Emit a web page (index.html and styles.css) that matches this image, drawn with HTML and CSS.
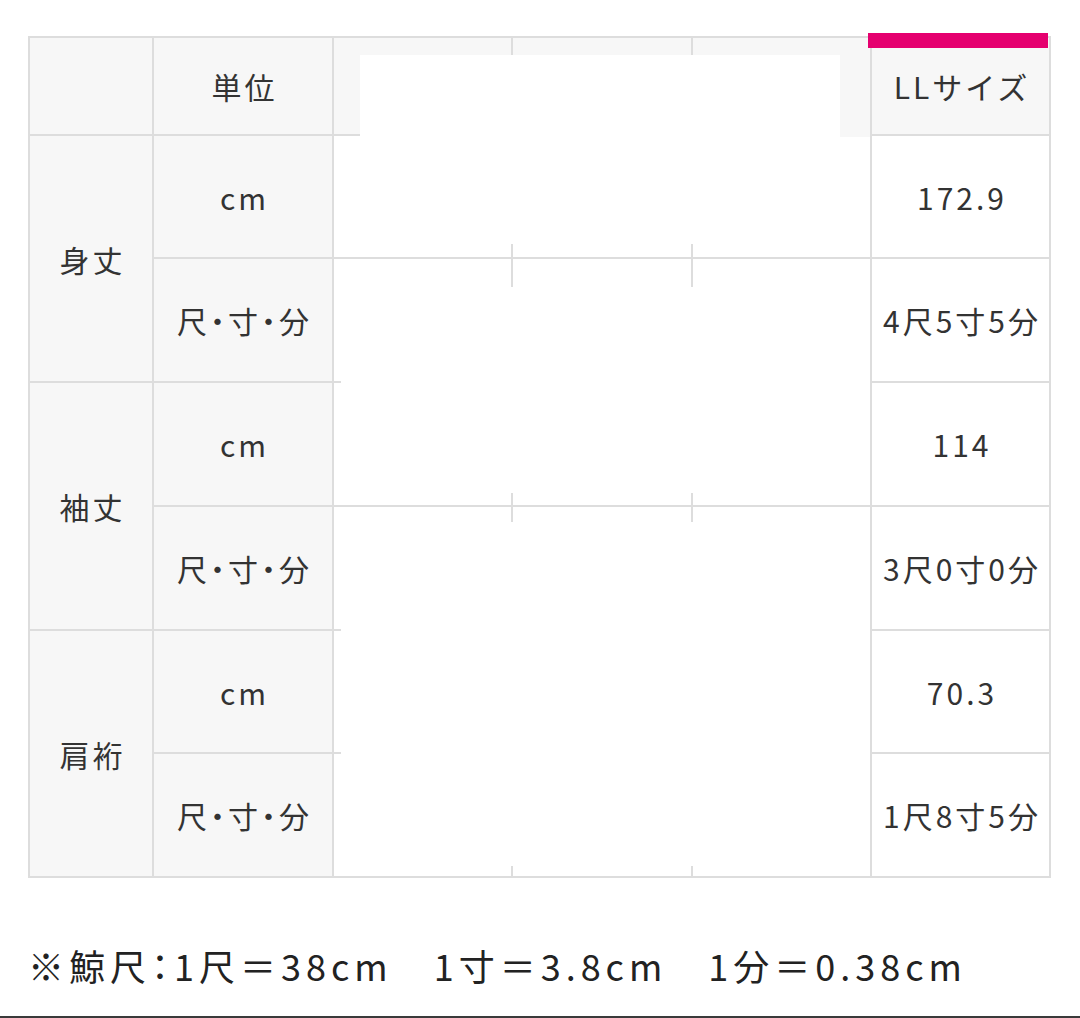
FILE: index.html
```html
<!DOCTYPE html>
<html lang="ja">
<head>
<meta charset="utf-8">
<title>サイズ表</title>
<link rel="stylesheet" href="styles.css">
</head>
<body>
<div class="page">
  <div class="sheet">
    <div class="grid">
      <div class="c hd"></div>
      <div class="c hd">単位</div>
      <div class="c hd"></div>
      <div class="c hd"></div>
      <div class="c hd"></div>
      <div class="c hd ll"><span class="accent"></span>LLサイズ</div>

      <div class="c lab span2">身丈</div>
      <div class="c lab">cm</div>
      <div class="c blank"></div>
      <div class="c blank"></div>
      <div class="c blank"></div>
      <div class="c val">172.9</div>

      <div class="c lab unit">尺・寸・分</div>
      <div class="c blank"></div>
      <div class="c blank"></div>
      <div class="c blank"></div>
      <div class="c val">4尺5寸5分</div>

      <div class="c lab span2">袖丈</div>
      <div class="c lab">cm</div>
      <div class="c blank"></div>
      <div class="c blank"></div>
      <div class="c blank"></div>
      <div class="c val">114</div>

      <div class="c lab unit">尺・寸・分</div>
      <div class="c blank"></div>
      <div class="c blank"></div>
      <div class="c blank"></div>
      <div class="c val">3尺0寸0分</div>

      <div class="c lab span2">肩裄</div>
      <div class="c lab">cm</div>
      <div class="c blank"></div>
      <div class="c blank"></div>
      <div class="c blank"></div>
      <div class="c val">70.3</div>

      <div class="c lab unit">尺・寸・分</div>
      <div class="c blank"></div>
      <div class="c blank"></div>
      <div class="c blank"></div>
      <div class="c val">1尺8寸5分</div>
    </div>
    <div class="mask m-head"></div>
    <div class="mask m-headline"></div>
    <div class="mask m-row1"></div>
    <div class="mask m-mid"></div>
    <div class="mask m-low"></div>
  </div>
  <p class="note">※鯨尺<span class="colon">：</span>1尺＝38cm　1寸＝3.8cm　1分＝0.38cm</p>
  <div class="rule"></div>
</div>
</body>
</html>
```

FILE: styles.css
```css
* { box-sizing: border-box; }

html, body {
  margin: 0;
  padding: 0;
  background: #ffffff;
}

body {
  font-family: "Noto Sans CJK JP", "Noto Sans", sans-serif;
  color: #333333;
  width: 1080px;
  height: 1018px;
  overflow: hidden;
}

.page {
  position: relative;
  height: 1018px;
  padding: 36px 0 0 28px;
}

.sheet {
  position: relative;
  width: 1023px;
}

.grid {
  display: grid;
  grid-template-columns: 124px 180px 179px 180px 179px 179px;
  grid-template-rows: 98px 123px 124px 124px 124px 123px 124px;
  border-top: 2px solid #dddddd;
  border-left: 2px solid #dddddd;
}

.c {
  display: flex;
  align-items: center;
  justify-content: center;
  border-right: 2px solid #dddddd;
  border-bottom: 2px solid #dddddd;
  font-size: 30px;
  letter-spacing: 3px;
  padding-left: 3px;
  line-height: 1;
  white-space: nowrap;
}

.hd { background: #f7f7f7; }
.lab { background: #f7f7f7; }
.blank { background: #ffffff; }
.val { background: #ffffff; }

.span2 { grid-row: span 2; }

.unit { font-feature-settings: "palt"; }

.ll { position: relative; }

.accent {
  position: absolute;
  top: -5px;
  left: -4px;
  width: 180px;
  height: 15px;
  background: #e5006f;
}

.mask {
  position: absolute;
  background: #ffffff;
}

/* redaction over the hidden size columns */
.m-head { left: 332px; top: 19px; width: 480px; height: 82px; }
.m-headline { left: 812px; top: 97px; width: 30px; height: 4px; background: #f7f7f7; }
.m-row1 { left: 306px; top: 101px; width: 536px; height: 107px; }
.m-mid { left: 313px; top: 251px; width: 529px; height: 206px; }
.m-low { left: 313px; top: 486px; width: 529px; height: 344px; }

.note {
  margin: 69px 0 0 0;
  font-size: 36px;
  letter-spacing: 5px;
  line-height: 1;
  white-space: nowrap;
  color: #222222;
}

.colon { font-feature-settings: "palt"; }

.rule {
  position: absolute;
  left: 0;
  right: 0;
  bottom: 0;
  height: 2px;
  background: #3a3a3a;
}
```
